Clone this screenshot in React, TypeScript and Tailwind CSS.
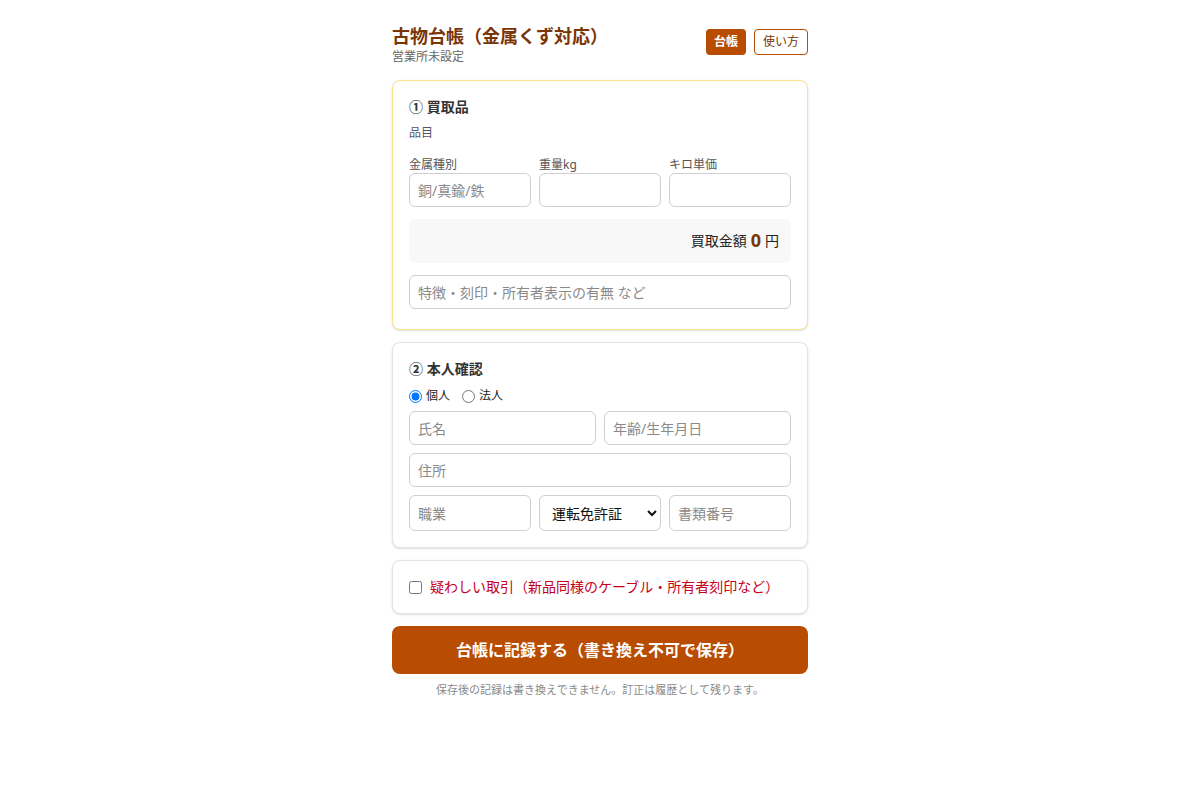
import React, { useState } from 'react';

const inputCls =
  'w-full h-[34px] rounded-md border border-[#cfcfcf] bg-white px-2 text-sm text-[#222] placeholder:text-[#8a8a8a] outline-none';

const App = () => {
  const [kind, setKind] = useState('individual');
  const [suspicious, setSuspicious] = useState(false);

  return (
    <div
      className="min-h-[800px] bg-white text-[#333]"
      style={{ fontFamily: '"Noto Sans", "Noto Sans CJK JP", sans-serif' }}
    >
      <div className="mx-auto w-[416px] pt-6">
        {/* header */}
        <div className="flex items-start justify-between">
          <div>
            <h1 className="text-[18px] font-bold leading-[25px] text-[#7a3506]">古物台帳（金属くず対応）</h1>
            <div className="text-xs leading-[16px] text-[#666]">営業所未設定</div>
          </div>
          <div className="mt-[5px] flex gap-2">
            <span className="flex h-[26px] items-center rounded bg-[#b84c00] px-2 text-xs font-bold text-white">
              台帳
            </span>
            <span className="flex h-[26px] items-center rounded border border-[#b84c00] bg-white px-2 text-xs text-[#7a3506]">
              使い方
            </span>
          </div>
        </div>

        {/* 1 */}
        <div className="mt-[15px] rounded-lg border border-[#fbe28f] bg-white px-4 pt-4 pb-5 shadow-sm">
          <div className="text-sm font-bold leading-5 text-[#333]">① 買取品</div>
          <div className="mt-[7px] text-xs leading-[17px] text-[#556]">品目</div>
          <div className="mt-[15px] grid grid-cols-3 gap-2">
            <label className="block">
              <div className="text-xs leading-[17px] text-[#555]">金属種別</div>
              <input className={inputCls} placeholder="銅/真鍮/鉄" />
            </label>
            <label className="block">
              <div className="text-xs leading-[17px] text-[#555]">重量kg</div>
              <input className={inputCls} />
            </label>
            <label className="block">
              <div className="text-xs leading-[17px] text-[#555]">キロ単価</div>
              <input className={inputCls} />
            </label>
          </div>
          <div className="mt-3 flex h-[44px] items-center justify-end rounded-md bg-[#f8f8f8] px-3 text-sm text-[#222]">
            買取金額<span className="mx-1 text-[18px] font-bold text-[#7a3506]">0</span>円
          </div>
          <input className={`${inputCls} mt-3`} placeholder="特徴・刻印・所有者表示の有無 など" />
        </div>

        {/* 2 */}
        <div className="mt-3 rounded-lg border border-[#e3e3e3] bg-white p-4 shadow-sm">
          <div className="text-sm font-bold leading-5 text-[#333]">② 本人確認</div>
          <div className="mt-[7px] flex h-5 items-center gap-3 text-xs text-[#222]">
            <label className="flex items-center gap-1">
              <input
                type="radio"
                name="kind"
                className="m-0 h-[13px] w-[13px]"
                checked={kind === 'individual'}
                onChange={() => setKind('individual')}
              />
              個人
            </label>
            <label className="flex items-center gap-1">
              <input
                type="radio"
                name="kind"
                className="m-0 h-[13px] w-[13px]"
                checked={kind === 'corp'}
                onChange={() => setKind('corp')}
              />
              法人
            </label>
          </div>
          <div className="mt-[5px] grid grid-cols-2 gap-2">
            <input className={inputCls} placeholder="氏名" />
            <input className={inputCls} placeholder="年齢/生年月日" />
          </div>
          <input className={`${inputCls} mt-2`} placeholder="住所" />
          <div className="mt-2 grid grid-cols-3 gap-2">
            <input className="h-9 w-full rounded-md border border-[#cfcfcf] bg-white px-2 text-sm placeholder:text-[#8a8a8a] outline-none" placeholder="職業" />
            <select className="h-9 w-full rounded-md border border-[#cfcfcf] bg-white px-2 text-sm text-[#111] outline-none">
              <option>運転免許証</option>
              <option>マイナンバーカード</option>
              <option>健康保険証</option>
              <option>パスポート</option>
            </select>
            <input className="h-9 w-full rounded-md border border-[#cfcfcf] bg-white px-2 text-sm placeholder:text-[#8a8a8a] outline-none" placeholder="書類番号" />
          </div>
        </div>

        {/* 3 */}
        <div className="mt-3 rounded-lg border border-[#e3e3e3] bg-white p-4 shadow-sm">
          <label className="flex items-center gap-2 text-sm leading-5 text-[#c4001a]">
            <input
              type="checkbox"
              className="m-0 h-[13px] w-[13px]"
              checked={suspicious}
              onChange={(e) => setSuspicious(e.target.checked)}
            />
            疑わしい取引（新品同様のケーブル・所有者刻印など）
          </label>
        </div>

        <button className="mt-3 h-12 w-full rounded-lg bg-[#b84c00] text-base font-bold text-white">
          台帳に記録する（書き換え不可で保存）
        </button>
        <div className="mt-2 text-center text-[11px] leading-4 text-[#8a8a8a]">
          保存後の記録は書き換えできません。訂正は履歴として残ります。
        </div>
      </div>
    </div>
  );
};

export default App;
